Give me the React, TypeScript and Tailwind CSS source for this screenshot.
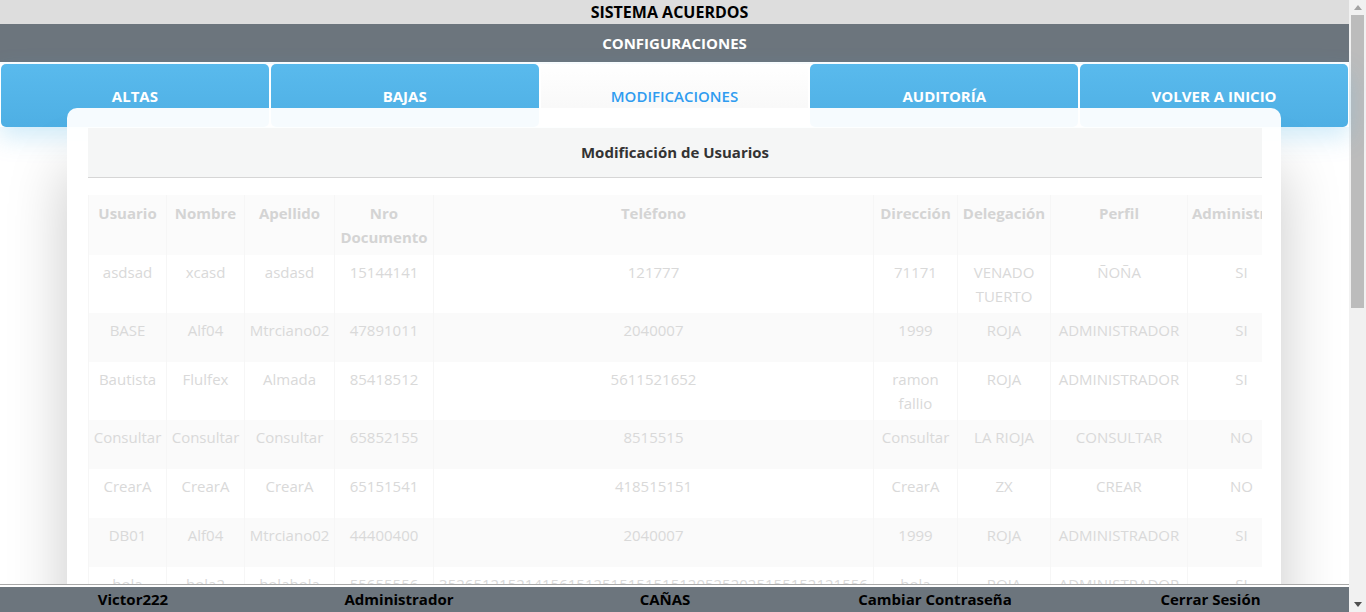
import React from 'react';

const tabs = [
  { label: 'ALTAS', active: false },
  { label: 'BAJAS', active: false },
  { label: 'MODIFICACIONES', active: true },
  { label: 'AUDITORÍA', active: false },
  { label: 'VOLVER A INICIO', active: false },
];

const columns = [
  { label: 'Usuario', width: 'w-[78px]' },
  { label: 'Nombre', width: 'w-[78px]' },
  { label: 'Apellido', width: 'w-[90px]' },
  { label: 'Nro Documento', width: 'w-[99px]' },
  { label: 'Teléfono', width: 'w-[440px]' },
  { label: 'Dirección', width: 'w-[84px]' },
  { label: 'Delegación', width: 'w-[93px]' },
  { label: 'Perfil', width: 'w-[137px]' },
  { label: 'Administrador', width: 'w-[108px]' },
];

const rows = [
  ['asdsad', 'xcasd', 'asdasd', '15144141', '121777', '71171', 'VENADO TUERTO', 'ÑOÑA', 'SI'],
  ['BASE', 'Alf04', 'Mtrciano02', '47891011', '2040007', '1999', 'ROJA', 'ADMINISTRADOR', 'SI'],
  ['Bautista', 'Flulfex', 'Almada', '85418512', '5611521652', 'ramon fallio', 'ROJA', 'ADMINISTRADOR', 'SI'],
  ['Consultar', 'Consultar', 'Consultar', '65852155', '8515515', 'Consultar', 'LA RIOJA', 'CONSULTAR', 'NO'],
  ['CrearA', 'CrearA', 'CrearA', '65151541', '418515151', 'CrearA', 'ZX', 'CREAR', 'NO'],
  ['DB01', 'Alf04', 'Mtrciano02', '44400400', '2040007', '1999', 'ROJA', 'ADMINISTRADOR', 'SI'],
  ['hola', 'hola2', 'holahola', '55655556', '35265121521415615125151515151205252025155152121556', 'hola', 'ROJA', 'ADMINISTRADOR', 'SI'],
];

const footerItems = ['Victor222', 'Administrador', 'CAÑAS', 'Cambiar Contraseña', 'Cerrar Sesión'];

export default function App() {
  return (
    <div className="h-screen w-full overflow-hidden flex bg-white font-['Open_Sans',sans-serif] text-[15px]">
      <div className="relative flex-1 min-w-0 flex flex-col">
        {/* top bars */}
        <div className="h-[24px] bg-[#dddddd] flex items-center justify-center font-bold text-black text-[16px] pr-[10px]">
          SISTEMA ACUERDOS
        </div>
        <div className="h-[38px] bg-[#6c757d] flex items-center justify-center font-bold text-white">
          CONFIGURACIONES
        </div>

        {/* tabs */}
        <div className="mt-[2px] px-[1px] grid grid-cols-5 gap-[2px] h-[63px] shadow-[0_10px_24px_rgba(86,183,234,0.28)]">
          {tabs.map((t) => (
            <div
              key={t.label}
              className={
                t.active
                  ? 'rounded-[5px] bg-gradient-to-b from-white to-[#f6f6f6] text-[#2f9cf0] font-semibold flex items-center justify-center pt-[1px]'
                  : 'rounded-[5px] bg-gradient-to-b from-[#59baed] to-[#4eafe4] text-white font-bold flex items-center justify-center pt-[1px]'
              }
            >
              {t.label}
            </div>
          ))}
        </div>

        <div className="flex-1" />

        {/* modal */}
        <div className="absolute left-[67px] right-[68px] top-[108px] bottom-[-40px] bg-white/95 rounded-[10px] shadow-[0_60px_60px_rgba(0,0,0,0.22)] pl-[21px] pr-[19px] pt-[20px] overflow-hidden">
          <div className="h-[50px] bg-[#f5f6f6] border-b border-[#d6d6d6] flex items-center justify-center font-bold text-[#333] text-[15px]">
            Modificación de Usuarios
          </div>
          <div className="mt-[17px] overflow-hidden">
            <table className="table-fixed border-collapse text-center text-[#d9d9d9] w-[1207px]">
              <thead>
                <tr className="bg-[#fbfbfb]">
                  {columns.map((c) => (
                    <th
                      key={c.label}
                      className={`${c.width} align-top pt-[6px] pb-[6px] px-[4px] font-bold leading-[24px] text-[#d4d4d4] border-x border-[#f6f6f6]`}
                    >
                      {c.label === 'Administrador' ? <span className="whitespace-nowrap">Administrador</span> : c.label}
                    </th>
                  ))}
                </tr>
              </thead>
              <tbody>
                {rows.map((r, i) => (
                  <tr key={i} className={i % 2 === 1 ? 'bg-[#fafafa] h-[49px]' : 'bg-white h-[49px]'}>
                    {r.map((cell, j) => (
                      <td
                        key={j}
                        className="align-top py-[5px] px-[4px] leading-[24px] border-x border-[#f6f6f6] break-words"
                      >
                        {cell}
                      </td>
                    ))}
                  </tr>
                ))}
              </tbody>
            </table>
          </div>
        </div>

        {/* footer */}
        <div className="relative z-10 border-t border-[#a8a8a8] bg-white pt-[2px]">
          <div className="h-[25px] bg-[#6c757d] grid grid-cols-[266px_266px_266px_274px_1fr] items-center text-center font-bold text-black">
            {footerItems.map((f) => (
              <div key={f}>{f}</div>
            ))}
          </div>
        </div>
      </div>

      {/* scrollbar */}
      <div className="w-[17px] bg-[#f1f1f1] flex flex-col items-center">
        <div className="h-[15px] flex items-center justify-center">
          <svg width="8" height="5" viewBox="0 0 8 5"><path d="M0 5 L4 0 L8 5 Z" fill="#a3a3a3" /></svg>
        </div>
        <div className="w-[13px] h-[293px] bg-[#bcbcbc]" />
        <div className="flex-1" />
        <div className="h-[15px] flex items-center justify-center">
          <svg width="8" height="5" viewBox="0 0 8 5"><path d="M0 0 L8 0 L4 5 Z" fill="#505050" /></svg>
        </div>
      </div>
    </div>
  );
}
